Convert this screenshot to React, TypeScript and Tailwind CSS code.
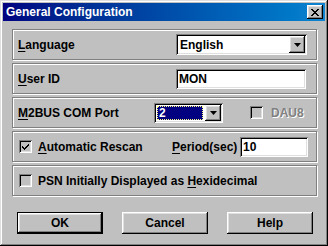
import React from "react";

const raised =
  "shadow-[inset_-1px_-1px_#000,inset_1px_1px_#fff,inset_-2px_-2px_#808080,inset_2px_2px_#dfdfdf]";
const sunken =
  "shadow-[inset_1px_1px_#808080,inset_-1px_-1px_#fff,inset_2px_2px_#000,inset_-2px_-2px_#dfdfdf]";
const etched =
  "border border-[#808080] shadow-[inset_1px_1px_0_#fff,1px_1px_0_#fff]";

function Key({ children }: { children: React.ReactNode }) {
  return <span className="underline underline-offset-[2px]">{children}</span>;
}

function ArrowButton() {
  return (
    <div
      className={`flex h-[17px] w-[16px] items-center justify-center bg-[#c0c0c0] ${raised}`}
    >
      <svg width="7" height="4" viewBox="0 0 7 4">
        <path d="M0 0h7L3.5 4z" fill="#000" />
      </svg>
    </div>
  );
}

function Checkbox({ checked }: { checked?: boolean }) {
  return (
    <div
      className={`flex h-[13px] w-[13px] shrink-0 items-center justify-center bg-[#c0c0c0] ${sunken}`}
    >
      {checked && (
        <svg width="7" height="7" viewBox="0 0 7 7">
          <path d="M0 3h1v1h1v1h1V4h1V3h1V2h1V1h1v2H6v1H5v1H4v1H3v1H2V6H1V5H0z" fill="#000" />
        </svg>
      )}
    </div>
  );
}

function Group({ children }: { children: React.ReactNode }) {
  return (
    <div className={`flex h-[31px] w-[305px] items-center pl-[5px] ${etched}`}>
      {children}
    </div>
  );
}

function Button({ label, primary }: { label: string; primary?: boolean }) {
  return (
    <div
      className={`flex h-[22px] w-[86px] items-center justify-center bg-[#c0c0c0] ${
        primary ? "border border-black" : ""
      } ${raised}`}
    >
      {label}
    </div>
  );
}

export default function App() {
  return (
    <div
      className="h-[246px] w-[328px] bg-[#c0c0c0] p-[3px] text-[12px] font-bold leading-none text-black shadow-[inset_-1px_-1px_#000,inset_1px_1px_#dfdfdf,inset_-2px_-2px_#808080,inset_2px_2px_#fff]"
      style={{ fontFamily: '"Liberation Sans", Arial, sans-serif' }}
    >
      <div className="flex h-[18px] items-center justify-between bg-gradient-to-r from-[#000080] to-[#1084d0] pl-[3px] pr-[2px]">
        <span className="text-[12px] text-white">General Configuration</span>
        <div
          className={`flex h-[14px] w-[16px] items-center justify-center bg-[#c0c0c0] ${raised}`}
        >
          <svg width="8" height="7" viewBox="0 0 8 7">
            <path
              d="M0 0h2v1h1v1h2V1h1V0h2v1H7v1H6v1H5v1h1v1h1v1h1v1H6V6H5V5H3v1H2v1H0V6h1V5h1V4h1V3H2V2H1V1H0z"
              fill="#000"
            />
          </svg>
        </div>
      </div>

      <div className="ml-[9px] mt-[8px] flex flex-col gap-[3px]">
        <Group>
          <span className="w-[158px]">
            <Key>L</Key>anguage
          </span>
          <div className={`flex h-[21px] w-[131px] items-center bg-white pl-[4px] pr-[2px] ${sunken}`}>
            <span className="flex-1">English</span>
            <ArrowButton />
          </div>
        </Group>

        <Group>
          <span className="w-[158px]">
            <Key>U</Key>ser ID
          </span>
          <div className={`flex h-[20px] w-[130px] items-center bg-white pl-[3px] ${sunken}`}>
            MON
          </div>
        </Group>

        <Group>
          <span className="w-[136px]">
            <Key>M</Key>2BUS COM Port
          </span>
          <div className={`flex h-[20px] w-[69px] items-center bg-white pl-[3px] pr-[2px] ${sunken}`}>
            <span className="mr-[2px] flex h-[14px] flex-1 items-center border border-dotted border-[#ffff80] bg-[#000080] pl-[1px] text-white">
              2
            </span>
            <div className="flex h-[16px] w-[16px] items-center justify-center bg-[#c0c0c0] shadow-[inset_-1px_-1px_#000,inset_1px_1px_#fff,inset_-2px_-2px_#808080,inset_2px_2px_#dfdfdf]">
              <svg width="7" height="4" viewBox="0 0 7 4">
                <path d="M0 0h7L3.5 4z" fill="#000" />
              </svg>
            </div>
          </div>
          <div className="ml-[27px] flex items-center gap-[8px]">
            <Checkbox />
            <span className="text-[#808080] [text-shadow:1px_1px_0_#fff]">DAU8</span>
          </div>
        </Group>

        <Group>
          <div className="ml-[1px] flex w-[153px] items-center gap-[6px]">
            <Checkbox checked />
            <span>
              <Key>A</Key>utomatic Rescan
            </span>
          </div>
          <span className="w-[68px]">
            <Key>P</Key>eriod(sec)
          </span>
          <div className={`flex h-[20px] w-[68px] items-center bg-white pl-[3px] ${sunken}`}>
            10
          </div>
        </Group>

        <Group>
          <div className="ml-[1px] flex items-center gap-[6px]">
            <Checkbox />
            <span>
              PSN Initially Displayed as <Key>H</Key>exidecimal
            </span>
          </div>
        </Group>
      </div>

      <div className="ml-[14px] mt-[16px] flex gap-[19px]">
        <Button label="OK" primary />
        <Button label="Cancel" />
        <Button label="Help" />
      </div>
    </div>
  );
}
